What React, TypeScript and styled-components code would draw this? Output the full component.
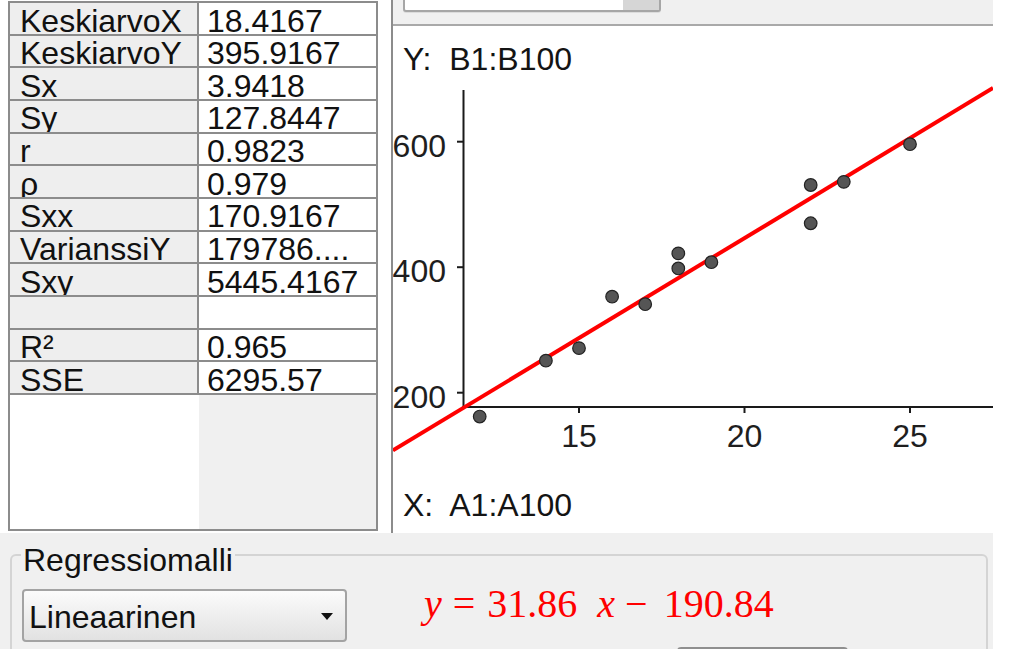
import React from "react";
import styled, { createGlobalStyle } from "styled-components";

const GlobalStyle = createGlobalStyle`
  html, body {
    margin: 0;
    padding: 0;
    background: #ffffff;
  }
  body {
    font-family: "Liberation Sans", Arial, sans-serif;
    color: #111111;
  }
`;

const lineGrey = "#8c8c8c";
const panelGrey = "#f0f0f0";

const AppFrame = styled.div`
  width: 993px;
  height: 649px;
  display: flex;
  flex-direction: column;
  background: ${panelGrey};
  overflow: hidden;
`;

const TopRow = styled.div`
  display: flex;
  height: 533px;
  flex-shrink: 0;
`;

/* ---------- statistics table ---------- */

const StatsPane = styled.div`
  width: 391px;
  box-sizing: border-box;
  padding: 1px 0 0 8px;
  background: #ffffff;
`;

const StatsBox = styled.div`
  width: 370px;
  height: 530px;
  box-sizing: border-box;
  border: 2px solid ${lineGrey};
  display: flex;
  flex-direction: column;
`;

const StatsGrid = styled.div`
  display: grid;
  grid-template-columns: 187px 177px;
  grid-auto-rows: 30.67px;
  gap: 2px;
  background: ${lineGrey};
  border-bottom: 2px solid ${lineGrey};
`;

const Cell = styled.div<{ $label?: boolean }>`
  background: ${(p) => (p.$label ? "#eeeeee" : "#ffffff")};
  font-size: 32px;
  line-height: 30px;
  padding: 2.5px 0 0 ${(p) => (p.$label ? 10 : 8)}px;
  overflow: hidden;
  white-space: nowrap;
`;

const EmptyArea = styled.div`
  flex: 1;
  display: grid;
  grid-template-columns: 189px 177px;
`;

const EmptyCell = styled.div<{ $shaded?: boolean }>`
  background: ${(p) => (p.$shaded ? panelGrey : "#ffffff")};
`;

/* ---------- plot ---------- */

const PlotPane = styled.div`
  flex: 1;
  border-left: 2px solid ${lineGrey};
  background: #ffffff;
  display: flex;
  flex-direction: column;
  overflow: hidden;
`;

const PlotToolbar = styled.div`
  height: 24px;
  flex-shrink: 0;
  background: ${panelGrey};
  border-bottom: 2px solid #a9a9a9;
  padding-left: 10px;
  overflow: hidden;
`;

const SourceCombo = styled.div`
  width: 258px;
  height: 30px;
  margin-top: -18px;
  box-sizing: border-box;
  border: 2px solid #a6a6a6;
  border-radius: 3px;
  display: flex;
  background: #ffffff;
  box-shadow: 0 1px 0 #dcdcdc;
`;

const SourceComboButton = styled.div`
  width: 36px;
  margin-left: auto;
  background: #d6d6d6;
`;

const PlotArea = styled.div`
  flex: 1;
  display: flex;
  flex-direction: column;
`;

const AxisSource = styled.div<{ $top: number }>`
  margin-top: ${(p) => p.$top}px;
  padding-left: 10px;
  font-size: 32px;
  line-height: 36px;
  white-space: pre;
  color: #141414;
`;

const Chart = styled.svg`
  display: block;
  flex-shrink: 0;
`;

/* ---------- regression model ---------- */

const ModelPanel = styled.div`
  flex: 1;
  padding: 2px 5px 0 10px;
  overflow: hidden;
`;

const ModelFieldset = styled.fieldset`
  margin: 0;
  height: 140px;
  min-width: 0;
  padding: 0 9px;
  border: 2px solid #d4d4d4;
  border-radius: 6px;
`;

const ModelLegend = styled.legend`
  font-size: 32px;
  line-height: 30px;
  padding: 10px 2px 0;
  color: #111111;
`;

const ModelRow = styled.div`
  display: flex;
  align-items: flex-start;
  margin-top: 14px;
`;

const ModelSelect = styled.div`
  width: 325px;
  height: 53px;
  margin-left: 1px;
  box-sizing: border-box;
  border: 2px solid #a3a3a3;
  border-radius: 4px;
  background: linear-gradient(#fbfbfb, #e2e2e2);
  display: flex;
  align-items: center;
  justify-content: space-between;
  padding: 4px 12px 0 5px;
  font-size: 32px;
  color: #111111;
`;

const SelectArrow = styled.span`
  width: 0;
  height: 0;
  border-left: 6.5px solid transparent;
  border-right: 6.5px solid transparent;
  border-top: 7px solid #111111;
  margin-top: -2px;
`;

const Equation = styled.div`
  margin: -5px 0 0 77px;
  display: flex;
  align-items: baseline;
  font-family: "Liberation Serif", "Times New Roman", serif;
  font-size: 40px;
  line-height: 40px;
  color: #ff0000;
  white-space: nowrap;
`;

const EqToken = styled.span<{ $gap: number; $italic?: boolean }>`
  margin-left: ${(p) => p.$gap}px;
  font-style: ${(p) => (p.$italic ? "italic" : "normal")};
`;

const ActionButton = styled.div`
  width: 171px;
  height: 30px;
  margin: 5px 0 0 656px;
  box-sizing: border-box;
  border: 2px solid #8f8f8f;
  border-radius: 4px;
  background: #e6e6e6;
`;

const stats: [string, string][] = [
  ["KeskiarvoX", "18.4167"],
  ["KeskiarvoY", "395.9167"],
  ["Sx", "3.9418"],
  ["Sy", "127.8447"],
  ["r", "0.9823"],
  ["ρ", "0.979"],
  ["Sxx", "170.9167"],
  ["VarianssiY", "179786...."],
  ["Sxy", "5445.4167"],
  ["", ""],
  ["R²", "0.965"],
  ["SSE", "6295.57"],
];

const points: [number, number][] = [
  [12, 162],
  [14, 251],
  [15, 271],
  [16, 353],
  [17, 341],
  [18, 422],
  [18, 398],
  [19, 408],
  [22, 470],
  [22, 531],
  [23, 536],
  [25, 596],
];

// chart coordinates are page pixels (the viewBox starts where the svg sits)
const px = (x: number) => 579 + (x - 15) * 33.1;
const py = (y: number) => 392.7 - (y - 200) * 0.6275;
const fit = (x: number) => 31.86 * x - 190.84;

const xTicks = [15, 20, 25];
const yTicks = [600, 400, 200];

const ScatterChart: React.FC = () => {
  const x0 = 15 + (393 - 579) / 33.1;
  const x1 = 15 + (993 - 579) / 33.1;
  return (
    <Chart width={600} height={410} viewBox="393 77 600 410">
      <g fontFamily='"Liberation Sans", Arial, sans-serif' fontSize={32} fill="#1e1e1e">
        {yTicks.map((t) => (
          <text key={t} x={446} y={py(t) + 15} textAnchor="end">
            {t}
          </text>
        ))}
        {xTicks.map((t) => (
          <text key={t} x={px(t)} y={447} textAnchor="middle">
            {t}
          </text>
        ))}
      </g>
      <g stroke="#1a1a1a" strokeWidth={2}>
        <line x1={463.5} y1={90} x2={463.5} y2={408} />
        <line x1={462.5} y1={407} x2={993} y2={407} />
        {yTicks.map((t) => (
          <line key={t} x1={457} y1={py(t)} x2={463.5} y2={py(t)} />
        ))}
        {xTicks.map((t) => (
          <line key={t} x1={px(t)} y1={407} x2={px(t)} y2={413} />
        ))}
      </g>
      <line
        x1={px(x0)}
        y1={py(fit(x0))}
        x2={px(x1)}
        y2={py(fit(x1))}
        stroke="#ff0000"
        strokeWidth={4}
      />
      {points.map(([x, y], i) => (
        <circle key={i} cx={px(x)} cy={py(y)} r={6.3} fill="#555555" stroke="#222222" strokeWidth={1.2} />
      ))}
    </Chart>
  );
};

const App: React.FC = () => {
  return (
    <>
      <GlobalStyle />
      <AppFrame>
        <TopRow>
          <StatsPane>
            <StatsBox>
              <StatsGrid>
                {stats.map(([label, value], i) => (
                  <React.Fragment key={i}>
                    <Cell $label>{label}</Cell>
                    <Cell>{value}</Cell>
                  </React.Fragment>
                ))}
              </StatsGrid>
              <EmptyArea>
                <EmptyCell />
                <EmptyCell $shaded />
              </EmptyArea>
            </StatsBox>
          </StatsPane>
          <PlotPane>
            <PlotToolbar>
              <SourceCombo>
                <SourceComboButton />
              </SourceCombo>
            </PlotToolbar>
            <PlotArea>
              <AxisSource $top={15}>{"Y:  B1:B100"}</AxisSource>
              <ScatterChart />
              <AxisSource $top={0}>{"X:  A1:A100"}</AxisSource>
            </PlotArea>
          </PlotPane>
        </TopRow>
        <ModelPanel>
          <ModelFieldset>
            <ModelLegend>Regressiomalli</ModelLegend>
            <ModelRow>
              <ModelSelect>
                <span>Lineaarinen</span>
                <SelectArrow />
              </ModelSelect>
              <Equation>
                <EqToken $gap={0} $italic>y</EqToken>
                <EqToken $gap={11}>=</EqToken>
                <EqToken $gap={12}>31.86</EqToken>
                <EqToken $gap={20} $italic>x</EqToken>
                <EqToken $gap={10}>−</EqToken>
                <EqToken $gap={16}>190.84</EqToken>
              </Equation>
            </ModelRow>
            <ActionButton />
          </ModelFieldset>
        </ModelPanel>
      </AppFrame>
    </>
  );
};

export default App;
